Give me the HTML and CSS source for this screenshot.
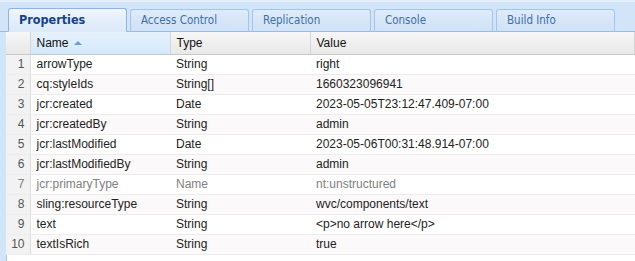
FILE: index.html
```html
<!DOCTYPE html>
<html lang="en">

<head>
    <meta charset="UTF-8">
    <title>Properties</title>
    <link rel="stylesheet" href="styles.css">
</head>

<body>
    <div class="tabbar">
        <div class="tab active">Properties</div>
        <div class="tab">Access Control</div>
        <div class="tab">Replication</div>
        <div class="tab">Console</div>
        <div class="tab">Build Info</div>
    </div>
    <div class="grid">
        <table>
            <colgroup>
                <col class="c-num">
                <col class="c-name">
                <col class="c-type">
                <col>
            </colgroup>
            <thead>
                <tr>
                    <th class="num"></th>
                    <th class="sorted">Name <span class="arrow"></span></th>
                    <th>Type</th>
                    <th>Value</th>
                </tr>
            </thead>
            <tbody>
                <tr><td class="num">1</td><td>arrowType</td><td>String</td><td>right</td></tr>
                <tr><td class="num">2</td><td>cq:styleIds</td><td>String[]</td><td>1660323096941</td></tr>
                <tr><td class="num">3</td><td>jcr:created</td><td>Date</td><td>2023-05-05T23:12:47.409-07:00</td></tr>
                <tr><td class="num">4</td><td>jcr:createdBy</td><td>String</td><td>admin</td></tr>
                <tr><td class="num">5</td><td>jcr:lastModified</td><td>Date</td><td>2023-05-06T00:31:48.914-07:00</td></tr>
                <tr><td class="num">6</td><td>jcr:lastModifiedBy</td><td>String</td><td>admin</td></tr>
                <tr class="protected"><td class="num">7</td><td>jcr:primaryType</td><td>Name</td><td>nt:unstructured</td></tr>
                <tr><td class="num">8</td><td>sling:resourceType</td><td>String</td><td>wvc/components/text</td></tr>
                <tr><td class="num">9</td><td>text</td><td>String</td><td>&lt;p&gt;no arrow here&lt;/p&gt;</td></tr>
                <tr><td class="num">10</td><td>textIsRich</td><td>String</td><td>true</td></tr>
            </tbody>
        </table>
    </div>
</body>

</html>
```

FILE: styles.css
```css
* {
    padding: 0;
    margin: 0;
    box-sizing: border-box;
}
html, body {
    height: 100%;
}
body {
    background: #fff;
    font-family: "Liberation Sans", Arial, sans-serif;
    font-size: 12px;
    color: #222;
    display: flex;
    flex-direction: column;
}
.tabbar {
    height: 32px;
    background: #d2e5f8;
    border-top: 2px solid #e3effb;
    border-bottom: 1px solid #99bbe8;
    display: flex;
    align-items: flex-end;
    gap: 3px;
    padding-left: 8px;
}
.tab {
    width: 119px;
    height: 23px;
    margin-bottom: -1px;
    border: 1px solid #a6c4eb;
    border-bottom: 1px solid #99bbe8;
    border-radius: 3px 3px 0 0;
    background: linear-gradient(#deebfa, #cfe2f7);
    color: #3c6fa8;
    font-family: "DejaVu Sans Condensed", "DejaVu Sans", sans-serif;
    font-size: 11.5px;
    line-height: 21px;
    padding-left: 10px;
}
.tab.active {
    height: 24px;
    background: linear-gradient(#eef5fd, #dbe9f9);
    border-color: #8db2e3;
    border-bottom-color: #dbe9f9;
    color: #15428b;
    font-size: 12.5px;
    font-weight: bold;
}
.grid {
    flex: 1;
    border-left: 6px solid #d2e5f8;
    box-shadow: inset 1px 0 0 #a9c7ec;
}
table {
    width: 100%;
    table-layout: fixed;
    border-collapse: collapse;
}
.c-num {
    width: 24px;
}
.c-name,
.c-type {
    width: 140px;
}
th {
    height: 22px;
    text-align: left;
    font-weight: normal;
    color: #111;
    padding-left: 6px;
    background: linear-gradient(#f6f6f6, #e8e8e8);
    border-right: 1px solid #d4d4d4;
    border-bottom: 1px solid #c9c9c9;
}
th.sorted {
    background: linear-gradient(#e6f2fd, #d4e8fb);
}
.arrow {
    display: inline-block;
    width: 0;
    height: 0;
    margin-left: 2px;
    vertical-align: 2px;
    border-left: 4px solid transparent;
    border-right: 4px solid transparent;
    border-bottom: 4px solid #6a9fd4;
}
td {
    height: 20px;
    padding-left: 6px;
    border-bottom: 1px solid #ececec;
    white-space: nowrap;
    overflow: hidden;
}
td.num {
    text-align: right;
    padding: 0 5px 0 0;
    background: #f2f2f2;
    color: #555;
    border-right: 1px solid #dcdcdc;
}
tbody tr:nth-child(even) td {
    background: #fbf9fa;
}
tbody tr:nth-child(even) td.num {
    background: #f2f2f2;
}
tr.protected td {
    color: #808080;
}
```
